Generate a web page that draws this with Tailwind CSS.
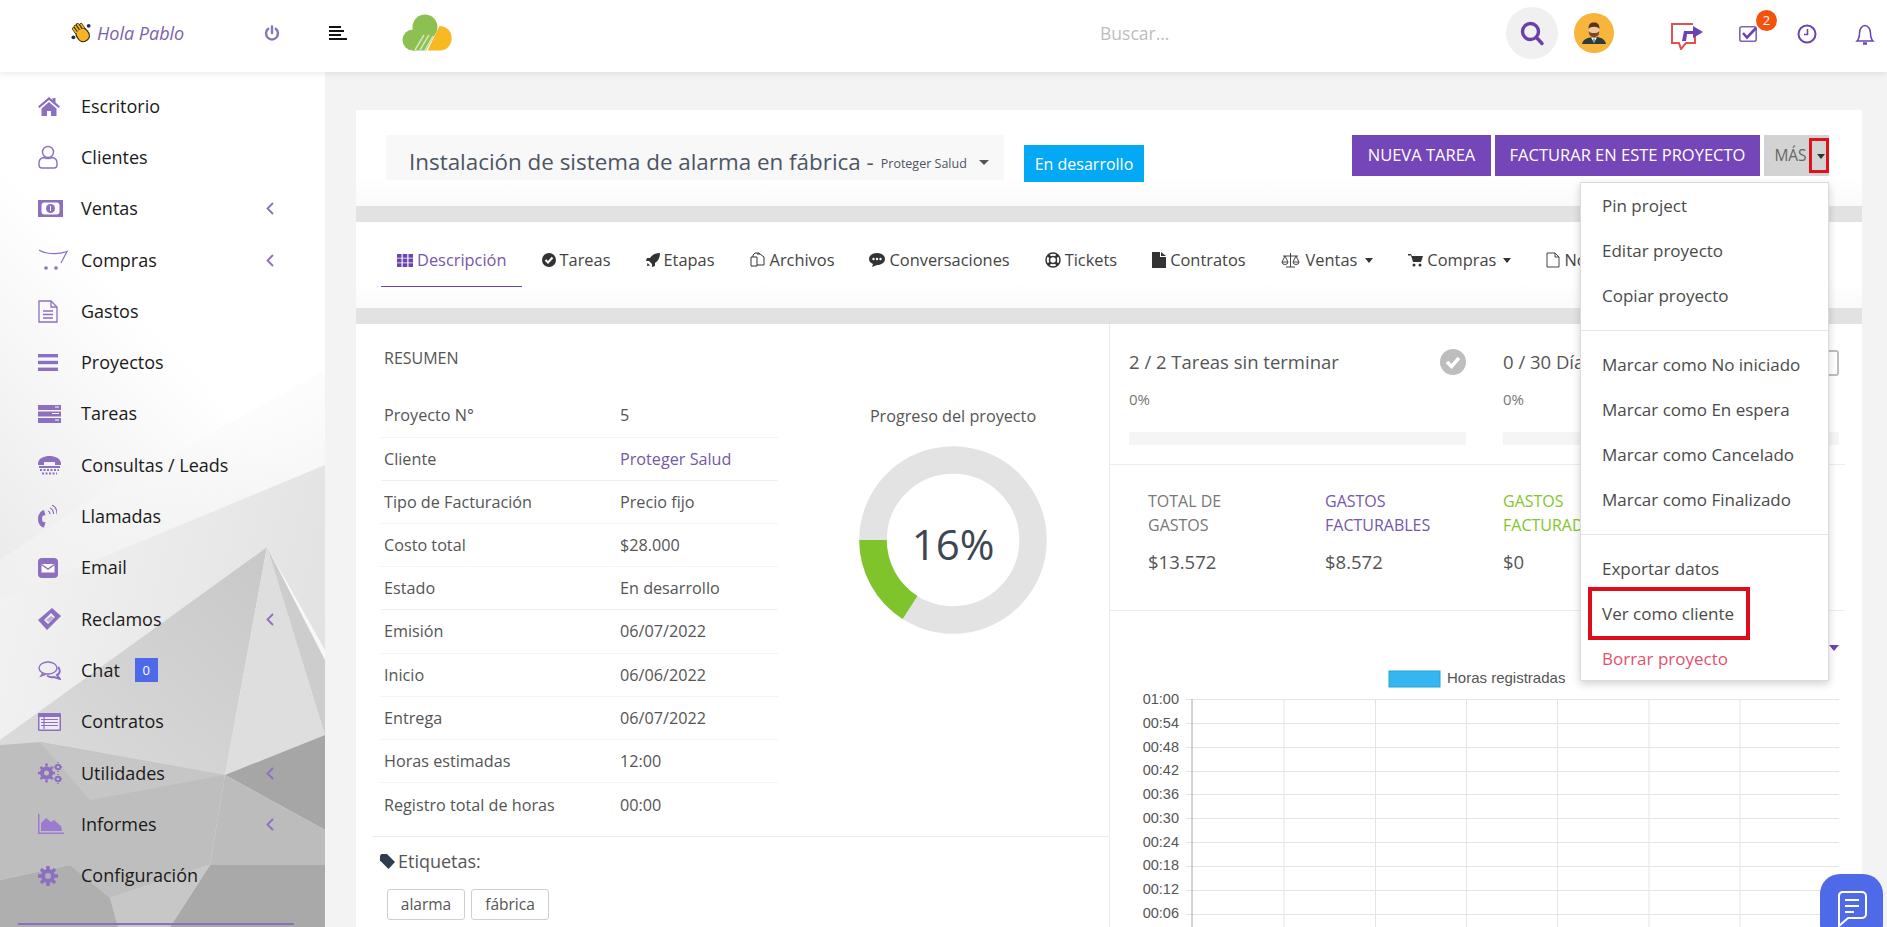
<!DOCTYPE html>
<html lang="es">
<head>
<meta charset="UTF-8" />
<title>Instalación de sistema de alarma en fábrica</title>
<script src="https://cdn.jsdelivr.net/npm/@tailwindcss/browser@4"></script>
</head>
<body class="h-screen overflow-hidden flex flex-col font-['Open_Sans',sans-serif] text-[#4a4a4a] bg-white relative">

<!-- header -->
<header class="h-[72px] shrink-0 flex items-center pb-[6px] bg-white relative z-10 shadow-[0_2px_6px_rgba(0,0,0,0.08)]">
  <div class="w-[325px] shrink-0 flex items-center pl-[71px]">
    <svg class="w-[21px] h-[21px]" viewBox="0 0 22 22"><circle cx="2.500" cy="15" r="2" fill="#1f3350"/><circle cx="18.500" cy="3" r="2" fill="#1f3350"/><g transform="rotate(-35 11 11)"><path d="M7 7V2M10 6V1M13 6V1M16 7V3" stroke="#3a2a10" stroke-width="3.200" stroke-linecap="round"/><rect x="5" y="6" width="12.500" height="14" rx="5.500" fill="#f5b527" stroke="#3a2a10" stroke-width="1.200"/><path d="M7 7V2M10 6V1M13 6V1M16 7V3" stroke="#f5b527" stroke-width="1.800" stroke-linecap="round"/></g></svg>
    <span class="ml-[5px] text-[18px] italic text-[#7a5fb0]">Hola Pablo</span>
    <svg class="ml-[80px] w-[16px] h-[16px]" viewBox="0 0 16 16" fill="none" stroke="#8a74bb" stroke-width="2.400" stroke-linecap="round"><path d="M8 1.500V8"/><path d="M4.200 3.800a6 6 0 1 0 7.600 0"/></svg>
  </div>
  <svg class="w-[18px] h-[14px] ml-[4px]" viewBox="0 0 18 14" fill="#111"><rect width="12" height="2"/><rect y="4" width="15" height="2"/><rect y="8" width="12" height="2"/><rect y="12" width="18" height="2"/></svg>
  <svg class="w-[52px] h-[38px] ml-[55px]" viewBox="0 0 52 38"><circle cx="23" cy="13" r="12.500" fill="#8cc152"/><circle cx="11" cy="26" r="10.500" fill="#8cc152"/><path d="M11 36.500V20H33L24 36.500Z" fill="#8cc152"/><path d="M25.500 36.500 37.500 12A12.300 12.300 0 0 1 39 36.500Z" fill="#f9b924"/><path d="M13 36 22 21M18 36 27 21M23 36 31 22" stroke="#d4e6bd" stroke-width="1.500"/></svg>
  <span class="ml-[646px] text-[17.500px] text-[#bdbdbd]">Buscar...</span>
  <div class="ml-auto flex items-center">
    <div class="w-[52px] h-[52px] rounded-full bg-[#f1f0f1] flex items-center justify-center">
      <svg class="w-[26px] h-[26px]" viewBox="0 0 26 26" fill="none" stroke="#6b3fa8" stroke-width="3.400" stroke-linecap="round"><circle cx="11.500" cy="11.500" r="8"/><path d="M17.500 17.500 23 23.500"/></svg>
    </div>
    <svg class="ml-[16px] w-[40px] h-[40px]" viewBox="0 0 40 40"><circle cx="20" cy="20" r="20" fill="#f7b53b"/><path d="M8 31c1-5 6-6.500 12-7s11 2 12 7Z" fill="#2f3a3a"/><path d="M17 24.500l3 5 3-5Z" fill="#fff"/><path d="M19.300 25.500h1.400V30h-1.400Z" fill="#3f9a7a"/><ellipse cx="20" cy="17" rx="5.500" ry="6.500" fill="#f2c6a0"/><path d="M14.500 16c0-5 2-6.500 5.500-6.500s5.500 1.500 5.500 6.500c-2-3-9-3-11 0Z" fill="#5b3418"/><path d="M14.700 18c0 4.500 2.300 6 5.300 6s5.300-1.500 5.300-6c-1.500 2-3 2-5.300 2s-3.800 0-5.300-2Z" fill="#7a4a25"/></svg>
    <svg class="ml-[57px] mt-[6px] w-[32px] h-[27px]" viewBox="0 0 32 27" fill="none"><path d="M22 1H1v19h7l2 6 5-6h9v-8" stroke="#e0524d" stroke-width="2"/><path d="M11 18 13 8h9V3l10 6-10 6v-4h-6l-1 7Z" fill="#6a44b0"/></svg>
    <div class="relative ml-[36px] mt-[2px] w-[18px] h-[16px]">
      <svg class="block w-[18px] h-[16px] overflow-visible" viewBox="0 0 18 16" fill="none"><rect x="0.800" y="0.800" width="16.400" height="14.400" rx="2" stroke="#7d65b5" stroke-width="1.600"/><path d="M4 7 8 11.500 17 2" stroke="#6a44b0" stroke-width="2.600"/></svg>
      <span class="absolute left-[17px] top-[-16px] w-[21px] h-[21px] rounded-full bg-[#f4520d] text-white text-[13px] flex items-center justify-center">2</span>
    </div>
    <svg class="ml-[40px] mt-[2px] w-[20px] h-[20px]" viewBox="0 0 20 20" fill="none" stroke="#6a44b0" stroke-width="2"><circle cx="10" cy="10" r="8.500"/><path d="M10.500 5v5.500H7" stroke-width="1.600"/></svg>
    <svg class="ml-[38px] mr-[12px] mt-[2px] w-[20px] h-[23px]" viewBox="0 0 20 23" fill="none" stroke="#6a44b0" stroke-width="1.500"><path d="M2 18c2-2 2.500-4 2.500-8S7 2.500 10 2.500 15.500 6 15.500 10s.5 6 2.500 8Z"/><path d="M8 20.500h4" stroke-width="2.500"/></svg>
  </div>
</header>

<div class="flex-1 flex min-h-0">
  <!-- sidebar -->
  <aside class="w-[325px] shrink-0 relative overflow-hidden bg-white">
    <svg class="absolute inset-0 w-[325px] h-[855px]" viewBox="0 72 325 855">
      <defs>
        <linearGradient id="sb" x1="0.6" y1="0" x2="0.2" y2="1"><stop offset="0.3" stop-color="#ffffff"/><stop offset="1" stop-color="#dcdcdc"/></linearGradient>
        <linearGradient id="g1" x1="0.2" y1="0" x2="0.8" y2="1"><stop offset="0" stop-color="#ffffff" stop-opacity="0"/><stop offset="1" stop-color="#ececec"/></linearGradient>
        <linearGradient id="g2" x1="0" y1="0.4" x2="1" y2="0.6"><stop offset="0" stop-color="#f2f2f2"/><stop offset="1" stop-color="#e2e2e2"/></linearGradient>
        <linearGradient id="g3" x1="0" y1="1" x2="1" y2="0"><stop offset="0" stop-color="#dcdcdc"/><stop offset="1" stop-color="#c8c8c8"/></linearGradient>
      </defs>
      <rect x="0" y="72" width="325" height="855" fill="url(#sb)"/>
      <path d="M325 370 L325 470 L0 610 L0 560 L90 500Z" fill="url(#g1)"/>
      <path d="M325 465 L325 650 L267 547 L0 740 L0 600Z" fill="url(#g2)"/>
      <path d="M267 547 L225 775 L40 742 L0 745 L0 740Z" fill="url(#g3)"/>
      <path d="M267 547 L325 735 L225 775Z" fill="#dedede"/>
      <path d="M267 547 L325 660 L325 735Z" fill="#cdcdcd"/>
      <path d="M0 745 L40 742 L225 775 L210 865 L110 898 L70 865 L0 880Z" fill="#bebebe"/>
      <path d="M40 742 L225 775 L90 800Z" fill="#c6c6c6"/>
      <path d="M225 775 L325 735 L325 830Z" fill="#a6a6a6"/>
      <path d="M225 775 L325 830 L325 865 L210 865Z" fill="#bcbcbc"/>
      <path d="M210 865 L325 865 L325 927 L170 927Z" fill="#a9a9a9"/>
      <path d="M110 898 L210 865 L170 927 L118 927Z" fill="#c7c7c7"/>
      <path d="M0 880 L70 865 L110 898 L118 927 L0 927Z" fill="#afafaf"/>
    </svg>
    <nav class="relative pt-[8.500px] text-[18px] font-medium text-[#1a1a1a]">
      <a class="h-[51.300px] flex items-center pl-[38px]"><span class="w-[43px] shrink-0"><svg class="w-[22px] h-[20px]" viewBox="0 0 22 20" fill="#8d6fc0"><path d="M11 1 0 10.500l1.500 1.500L11 4l9.500 8 1.500-1.500L17.500 6.500V2h-3v2Z"/><path d="M3.500 12.500 11 6l7.500 6.500V20H13v-5H9v5H3.500Z"/></svg></span>Escritorio</a>
      <a class="h-[51.300px] flex items-center pl-[38px]"><span class="w-[43px] shrink-0"><svg class="w-[20px] h-[24px]" viewBox="0 0 20 24" fill="none" stroke="#8d6fc0" stroke-width="1.400"><circle cx="10" cy="7" r="5.500"/><path d="M6 12.500C3 13 1 15 1 18v2c0 2 1 3 3 3h12c2 0 3-1 3-3v-2c0-3-2-5-5-5.500-2 1.500-6 1.500-8 0Z"/></svg></span>Clientes</a>
      <a class="h-[51.300px] flex items-center pl-[38px]"><span class="w-[43px] shrink-0"><svg class="w-[25px] h-[17px]" viewBox="0 0 25 17"><rect width="25" height="17" fill="#8d6fc0"/><rect x="3.500" y="2.500" width="18" height="12" rx="3" fill="#fff"/><circle cx="12.500" cy="8.500" r="4.500" fill="#8d6fc0"/><path d="M12 6h1v5h-1Z" fill="#fff"/></svg></span>Ventas<svg class="absolute left-[266px] w-[8px] h-[13px]" viewBox="0 0 8 13" fill="none" stroke="#8d6fc0" stroke-width="1.800"><path d="M7 1 1.500 6.500 7 12"/></svg></a>
      <a class="h-[51.300px] flex items-center pl-[38px]"><span class="w-[43px] shrink-0"><svg class="w-[30px] h-[22px]" viewBox="0 0 30 22" fill="none" stroke="#8d6fc0" stroke-width="1.200"><path d="M1 1c3 2 5 2.500 8 3 6 1 13 1 20-1.500L23 14"/><circle cx="8" cy="19" r="1.800" fill="#8d6fc0" stroke="none"/><circle cx="18" cy="19" r="1.800" fill="#8d6fc0" stroke="none"/></svg></span>Compras<svg class="absolute left-[266px] w-[8px] h-[13px]" viewBox="0 0 8 13" fill="none" stroke="#8d6fc0" stroke-width="1.800"><path d="M7 1 1.500 6.500 7 12"/></svg></a>
      <a class="h-[51.300px] flex items-center pl-[38px]"><span class="w-[43px] shrink-0"><svg class="w-[20px] h-[23px]" viewBox="0 0 20 23" fill="none" stroke="#8d6fc0" stroke-width="1.300"><path d="M1 1h12l6 6v15H1Z"/><path d="M13 1v6h6M5 11h10M5 14.500h10M5 18h10"/></svg></span>Gastos</a>
      <a class="h-[51.300px] flex items-center pl-[38px]"><span class="w-[43px] shrink-0"><svg class="w-[20px] h-[17px]" viewBox="0 0 20 17" fill="#8d6fc0"><rect width="20" height="3.400"/><rect y="6.800" width="20" height="3.400"/><rect y="13.600" width="20" height="3.400"/></svg></span>Proyectos</a>
      <a class="h-[51.300px] flex items-center pl-[38px]"><span class="w-[43px] shrink-0"><svg class="w-[23px] h-[18px]" viewBox="0 0 23 18"><rect width="23" height="5" fill="#8d6fc0"/><rect y="6.500" width="23" height="5" fill="#8d6fc0"/><rect y="13" width="23" height="5" fill="#8d6fc0"/><path d="M17 2h4M14 8.500h7M17 15h4" stroke="#fff" stroke-width="1"/></svg></span>Tareas</a>
      <a class="h-[51.300px] flex items-center pl-[38px]"><span class="w-[43px] shrink-0"><svg class="w-[23px] h-[19px]" viewBox="0 0 23 19" fill="#8d6fc0"><path d="M0 7C1 2 6 0 11.500 0S22 2 23 7v2h-6V6H6v3H0Z"/><rect x="1" y="10" width="21" height="2"/><path d="M2 14h19M4 17.500h15" stroke="#8d6fc0" stroke-width="2" stroke-dasharray="2 1.500"/></svg></span>Consultas / Leads</a>
      <a class="h-[51.300px] flex items-center pl-[38px]"><span class="w-[43px] shrink-0"><svg class="w-[19px] h-[23px]" viewBox="0 0 19 23" fill="none"><path d="M6 5C2 6 0 10 0 14s2 8 6 8.500l1.500-5-3-1c-.5-2-.5-4 0-5.500l3-1L6 5Z" fill="#8d6fc0"/><path d="M10 6c1.500.5 2 2 2 3M12 3c2.500 1 3.500 3.500 3.500 6M14 0c3.500 1.500 5 5 5 9" stroke="#8d6fc0" stroke-width="1.200"/></svg></span>Llamadas</a>
      <a class="h-[51.300px] flex items-center pl-[38px]"><span class="w-[43px] shrink-0"><svg class="w-[20px] h-[20px]" viewBox="0 0 20 20"><rect width="20" height="20" rx="4" fill="#8d6fc0"/><path d="M3.500 6h13v8.500h-13Z" fill="#fff"/><path d="M3.500 6.500 10 11l6.500-4.500" fill="none" stroke="#8d6fc0" stroke-width="1.500"/></svg></span>Email</a>
      <a class="h-[51.300px] flex items-center pl-[38px]"><span class="w-[43px] shrink-0"><svg class="w-[23px] h-[22px]" viewBox="0 0 23 22" fill="#8d6fc0"><path d="M0 12 14 0l9 8-14 14ZM6 12l4 4 7-7-4-4Z" fill-rule="evenodd"/><path d="M8 12l5-4 3 2-5 4Z" opacity="0.500"/></svg></span>Reclamos<svg class="absolute left-[266px] w-[8px] h-[13px]" viewBox="0 0 8 13" fill="none" stroke="#8d6fc0" stroke-width="1.800"><path d="M7 1 1.500 6.500 7 12"/></svg></a>
      <a class="h-[51.300px] flex items-center pl-[38px]"><span class="w-[43px] shrink-0"><svg class="w-[23px] h-[19px]" viewBox="0 0 23 19" fill="none" stroke="#8d6fc0" stroke-width="1.400"><ellipse cx="10" cy="7" rx="9" ry="6"/><path d="M5 12 3 15l5-2"/><path d="M20 6c2 2 3 6-1 8l3 4-6-2c-2 .5-5 0-7-1.500" stroke-width="2"/></svg></span>Chat<span class="ml-[15px] w-[23px] h-[24px] bg-[#4f6ae8] text-white text-[13px] font-normal flex items-center justify-center">0</span></a>
      <a class="h-[51.300px] flex items-center pl-[38px]"><span class="w-[43px] shrink-0"><svg class="w-[23px] h-[18px]" viewBox="0 0 23 18"><rect width="23" height="18" rx="1" fill="#8d6fc0"/><rect x="1.500" y="4" width="20" height="12.500" fill="#efeaf6"/><path d="M3 6.500h17M3 9.500h17M3 12.500h17M6 4v12" stroke="#8d6fc0" stroke-width="1.200"/></svg></span>Contratos</a>
      <a class="h-[51.300px] flex items-center pl-[38px]"><span class="w-[43px] shrink-0"><svg class="w-[24px] h-[23px]" viewBox="0 0 24 23" fill="none" stroke="#8d6fc0"><circle cx="8.500" cy="11" r="4.500" stroke-width="4"/><path d="M8.500 1.500v3M8.500 17.500v3M0 11h3M14 11h3M2.500 5l2 2M12.500 15l2 2M2.500 17l2-2M12.500 7l2-2" stroke-width="2.500"/><circle cx="20" cy="5" r="2.300" stroke-width="2"/><circle cx="20" cy="17" r="2.300" stroke-width="2"/><path d="M20 0v1M20 9v1M15.500 5h1M23 5h1M20 12v1M20 21v1M15.500 17h1M23 17h1" stroke-width="1.500"/></svg></span>Utilidades<svg class="absolute left-[266px] w-[8px] h-[13px]" viewBox="0 0 8 13" fill="none" stroke="#8d6fc0" stroke-width="1.800"><path d="M7 1 1.500 6.500 7 12"/></svg></a>
      <a class="h-[51.300px] flex items-center pl-[38px]"><span class="w-[43px] shrink-0"><svg class="w-[26px] h-[20px]" viewBox="0 0 26 20" fill="#9b7bd0"><path d="M0 0h1.500v18.500H26V20H0Z"/><path d="M3 17V9l5-5 5 4 3-2 7 6 1 5Z"/></svg></span>Informes<svg class="absolute left-[266px] w-[8px] h-[13px]" viewBox="0 0 8 13" fill="none" stroke="#8d6fc0" stroke-width="1.800"><path d="M7 1 1.500 6.500 7 12"/></svg></a>
      <a class="h-[51.300px] flex items-center pl-[38px]"><span class="w-[43px] shrink-0"><svg class="w-[20px] h-[20px]" viewBox="0 0 20 20" fill="none" stroke="#8d6fc0"><circle cx="10" cy="10" r="5" stroke-width="4"/><path d="M10 0v4M10 16v4M0 10h4M16 10h4M3 3l2.500 2.500M14.500 14.500 17 17M3 17l2.500-2.500M14.500 5.500 17 3" stroke-width="3.600"/></svg></span>Configuración</a>
    </nav>
    <div class="absolute left-[18px] w-[276px] top-[851px] h-[2px] bg-[#8d6fc0]"></div>
  </aside>

  <!-- main -->
  <main class="flex-1 min-w-0 bg-[#f3f3f3] pl-[31px] pr-[25px] pt-[38px] overflow-hidden">
    <div class="bg-[#e2e2e2] flex flex-col gap-[16px]">

      <section class="h-[96px] bg-linear-to-b from-white from-70% to-[#fafafa] flex items-start pl-[30px] pr-[33px] pt-[25px]">
        <div class="w-[618px] h-[45px] bg-[#f8f8f8] pl-[23px] pt-[8px] flex items-center text-[#4b5563]">
          <span class="text-[22.400px]">Instalación de sistema de alarma en fábrica -</span>
          <span class="ml-[7px] text-[12.500px] mt-[5px]">Proteger Salud</span>
          <span class="ml-[12px] mt-[2px] w-0 h-0 border-x-[5px] border-x-transparent border-t-[5px] border-t-[#555]"></span>
        </div>
        <span class="ml-[20px] mt-[10px] w-[120px] h-[37px] bg-[#03a9f4] text-white text-[16px] flex items-center justify-center">En desarrollo</span>
        <div class="ml-auto flex gap-[4px] text-[16.500px] font-medium text-white">
          <button class="w-[139px] h-[41px] bg-[#7546b8]">NUEVA TAREA</button>
          <button class="w-[265px] h-[41px] bg-[#7546b8]">FACTURAR EN ESTE PROYECTO</button>
          <button class="relative w-[65px] h-[41px] bg-[#d3d3d3] text-[#666] font-normal text-[15.500px] pr-[12px]">MÁS
            <span class="absolute right-[4px] top-[19px] w-0 h-0 border-x-[4px] border-x-transparent border-t-[5px] border-t-[#333]"></span>
            <span class="absolute right-0 top-[3px] w-[20px] h-[35px] border-[3px] border-[#e0101c]"></span>
          </button>
        </div>
      </section>

      <section class="h-[86px] bg-linear-to-b from-white from-70% to-[#fafafa] relative overflow-hidden">
        <div class="flex items-center gap-[35px] pl-[41px] pt-[26px] text-[16.400px] text-[#444] whitespace-nowrap">
          <a class="flex items-center gap-[4px] text-[#7557a8]"><svg class="w-[16px] h-[13px]" viewBox="0 0 16 13" fill="#6a44b0"><path d="M0 0h4.500v3.800H0ZM5.700 0h4.600v3.800H5.700ZM11.500 0H16v3.800h-4.500ZM0 4.600h4.500v3.800H0ZM5.700 4.600h4.600v3.800H5.700ZM11.500 4.600H16v3.800h-4.500ZM0 9.200h4.500V13H0ZM5.700 9.200h4.600V13H5.700ZM11.500 9.200H16V13h-4.500Z"/></svg>Descripción</a>
          <a class="flex items-center gap-[4px]"><svg class="w-[14px] h-[14px]" viewBox="0 0 14 14"><circle cx="7" cy="7" r="7" fill="#333"/><path d="M3.500 7 6 9.500l4.500-5" fill="none" stroke="#fff" stroke-width="2"/></svg>Tareas</a>
          <a class="flex items-center gap-[4px]"><svg class="w-[14px] h-[14px]" viewBox="0 0 14 14" fill="#333"><path d="M14 0C9 0 6 2 4 5H1L0 8h3l3 3v3l3-1V10c3-2 5-5 5-10Z"/><path d="M1.500 10 4 12.500 1 13Z"/></svg>Etapas</a>
          <a class="flex items-center gap-[4px]"><svg class="w-[16px] h-[16px]" viewBox="0 0 16 16" fill="none" stroke="#333"><path d="M1 5h6v9H1ZM7 2h3l4 3v8H7"/><path d="M3 5V3l2-2h4l1 1"/></svg>Archivos</a>
          <a class="flex items-center gap-[4px]"><svg class="w-[16px] h-[14px]" viewBox="0 0 16 14"><path d="M8 0c4.500 0 8 2.500 8 6s-3.500 6-8 6l-5 2 1-3C1.500 10 0 8 0 6c0-3.500 3.500-6 8-6Z" fill="#333"/><circle cx="4.500" cy="6" r="1.200" fill="#fff"/><circle cx="8" cy="6" r="1.200" fill="#fff"/><circle cx="11.500" cy="6" r="1.200" fill="#fff"/></svg>Conversaciones</a>
          <a class="flex items-center gap-[4px]"><svg class="w-[16px] h-[16px]" viewBox="0 0 16 16" fill="none" stroke="#333"><circle cx="8" cy="8" r="7" stroke-width="1.500"/><circle cx="8" cy="8" r="3.500" stroke-width="1.500"/><path d="M3 3l2.500 2.500M13 3l-2.500 2.500M3 13l2.500-2.500M13 13l-2.500-2.500" stroke-width="2.500"/></svg>Tickets</a>
          <a class="flex items-center gap-[4px]"><svg class="w-[14px] h-[16px]" viewBox="0 0 14 16" fill="#333"><path d="M0 0h8v5h6v11H0Z"/><path d="M9 0l5 4H9Z"/></svg>Contratos</a>
          <a class="flex items-center gap-[6px]"><svg class="w-[19px] h-[15px]" viewBox="0 0 19 15" fill="none" stroke="#444"><path d="M9.500 0v14M5 14h9M2 3h15M4 3 1 9h6ZM15 3l-3 6h6Z"/><path d="M1 9a3 2.500 0 0 0 6 0M12 9a3 2.500 0 0 0 6 0"/></svg>Ventas<span class="ml-[2px] w-0 h-0 border-x-[4px] border-x-transparent border-t-[5px] border-t-[#333]"></span></a>
          <a class="flex items-center gap-[4px]"><svg class="w-[15px] h-[14px]" viewBox="0 0 15 14" fill="#333"><path d="M0 1h3l1 2h11l-2 6H5L3 2.500H0Z"/><circle cx="6" cy="12" r="1.500"/><circle cx="12" cy="12" r="1.500"/></svg>Compras<span class="ml-[3px] w-0 h-0 border-x-[4px] border-x-transparent border-t-[5px] border-t-[#333]"></span></a>
          <a class="flex items-center gap-[4px]"><svg class="w-[14px] h-[16px]" viewBox="0 0 14 16" fill="none" stroke="#444"><path d="M1 1h8l4 4v10H1ZM9 1v4h4"/></svg>Notas</a>
        </div>
        <div class="absolute left-[25px] top-[64px] w-[141px] h-[1px] bg-[#6a44b0]"></div>
      </section>

      <section class="h-[700px] bg-white flex">
        <div class="w-[753px] shrink-0">
          <div class="flex">
            <div class="w-[422px] shrink-0 pl-[25px]">
              <h4 class="pl-[3px] pt-[22px] h-[70.500px] text-[16px] uppercase text-[#555]">Resumen</h4>
              <div class="text-[16.200px] text-[#555]">
                <div class="h-[43.200px] flex items-center border-b border-[#f1f4f5] pl-[3px]"><span class="w-[236px]">Proyecto N°</span><span>5</span></div>
                <div class="h-[43.200px] flex items-center border-b border-[#e6f2f7] pl-[3px]"><span class="w-[236px]">Cliente</span><span class="text-[#7557a8]">Proteger Salud</span></div>
                <div class="h-[43.200px] flex items-center border-b border-[#f1f4f5] pl-[3px]"><span class="w-[236px]">Tipo de Facturación</span><span>Precio fijo</span></div>
                <div class="h-[43.200px] flex items-center border-b border-[#f1f4f5] pl-[3px]"><span class="w-[236px]">Costo total</span><span>$28.000</span></div>
                <div class="h-[43.200px] flex items-center border-b border-[#e6f2f7] pl-[3px]"><span class="w-[236px]">Estado</span><span>En desarrollo</span></div>
                <div class="h-[43.200px] flex items-center border-b border-[#f1f4f5] pl-[3px]"><span class="w-[236px]">Emisión</span><span>06/07/2022</span></div>
                <div class="h-[43.200px] flex items-center border-b border-[#f1f4f5] pl-[3px]"><span class="w-[236px]">Inicio</span><span>06/06/2022</span></div>
                <div class="h-[43.200px] flex items-center border-b border-[#f1f4f5] pl-[3px]"><span class="w-[236px]">Entrega</span><span>06/07/2022</span></div>
                <div class="h-[43.200px] flex items-center border-b border-[#f1f4f5] pl-[3px]"><span class="w-[236px]">Horas estimadas</span><span>12:00</span></div>
                <div class="h-[43.200px] flex items-center pl-[3px]"><span class="w-[236px]">Registro total de horas</span><span>00:00</span></div>
              </div>
            </div>
            <div class="flex-1 pl-[19px] pt-[80px] flex flex-col items-center text-[#555]">
              <span class="text-[16.200px]">Progreso del proyecto</span>
              <div class="relative mt-[18px] w-[188px] h-[188px]">
                <svg class="w-[188px] h-[188px]" viewBox="0 0 188 188" fill="none" stroke-width="27.500"><circle cx="94" cy="94" r="80" stroke="#e3e3e3"/><path d="M14 94A80 80 0 0 0 51 161.500" stroke="#7fc42b"/></svg>
                <span class="absolute inset-0 pt-[6px] flex items-center justify-center text-[42px] text-[#3d4653]">16%</span>
              </div>
            </div>
          </div>
          <div class="ml-[16px] mt-[10px] border-t border-[#ececec] pl-[8px] pt-[11px]">
            <div class="flex items-center gap-[3px] text-[18px] text-[#555]"><svg class="w-[15px] h-[15px]" viewBox="0 0 15 15" fill="#2f3e4e"><path d="M0 1.500 1.500 0H7l8 8-6.500 7L0 6.500Z"/></svg>Etiquetas:</div>
            <div class="flex gap-[6px] mt-[14px] ml-[7px] text-[15.500px] text-[#555]">
              <span class="w-[78px] h-[31px] border border-[#cfcfcf] rounded-[3px] flex items-center justify-center">alarma</span>
              <span class="w-[78px] h-[31px] border border-[#cfcfcf] rounded-[3px] flex items-center justify-center">fábrica</span>
            </div>
          </div>
        </div>

        <div class="flex-1 min-w-0 border-l border-[#ececec] relative">
          <div class="h-[141px] flex pl-[19px] border-b border-[#ececec] mr-[17px] overflow-hidden">
            <div class="w-[337px] shrink-0 pt-[26px]">
              <div class="flex items-center justify-between h-[24px] text-[18.500px] text-[#555]">2 / 2 Tareas sin terminar
                <svg class="w-[26px] h-[26px]" viewBox="0 0 26 26"><circle cx="13" cy="13" r="13" fill="#bdbdbd"/><path d="M7 13l4.500 4.500L19 9" fill="none" stroke="#fff" stroke-width="3.500"/></svg>
              </div>
              <div class="mt-[14px] text-[15px] text-[#777]">0%</div>
              <div class="mt-[21px] h-[13px] bg-[#f5f5f5]"></div>
            </div>
            <div class="ml-[37px] w-[336px] shrink-0 pt-[26px]">
              <div class="flex items-center justify-between h-[24px] text-[18.500px] text-[#555]">0 / 30 Días para el final
                <svg class="w-[16px] h-[28px]" viewBox="0 0 16 28" fill="none" stroke="#bdbdbd" stroke-width="2"><rect x="1" y="3" width="14" height="24" rx="2"/></svg>
              </div>
              <div class="mt-[14px] text-[15px] text-[#777]">0%</div>
              <div class="mt-[21px] h-[13px] bg-[#f5f5f5]"></div>
            </div>
          </div>
          <div class="h-[146px] flex pl-[38px] pt-[24px] border-b border-[#ececec] mr-[17px] text-[16px] leading-[24px] whitespace-nowrap overflow-hidden">
            <div class="w-[177px] shrink-0 text-[#777]"><div>TOTAL DE<br>GASTOS</div><div class="mt-[13px] text-[18.500px] text-[#555]">$13.572</div></div>
            <div class="w-[178px] shrink-0 text-[#7557a8]"><div>GASTOS<br>FACTURABLES</div><div class="mt-[13px] text-[18.500px] text-[#555]">$8.572</div></div>
            <div class="text-[#84c529]"><div>GASTOS<br>FACTURADOS</div><div class="mt-[13px] text-[18.500px] text-[#555]">$0</div></div>
          </div>
          <svg class="block w-[752px] h-[330px]" viewBox="1110 611 752 330" font-family="Liberation Sans, sans-serif" font-size="14.500" fill="#555">
            <path d="M1829 645h10l-5 6Z" fill="#6a44b0"/>
            <rect x="1389" y="671" width="51" height="16" fill="#36b6f0" stroke="#25a0d8"/>
            <text x="1447" y="683" font-size="15">Horas registradas</text>
            <g stroke="#e4e4e4" stroke-width="1">
              <path d="M1186 699.500H1839M1186 723.500H1839M1186 747.500H1839M1186 771.500H1839M1186 794.500H1839M1186 818.500H1839M1186 842.500H1839M1186 866.500H1839M1186 890.500H1839M1186 914.500H1839"/>
              <path d="M1284 699V940M1375.500 699V940M1466.500 699V940M1557.500 699V940M1649 699V940M1740 699V940"/>
            </g>
            <path d="M1192 699V940" stroke="#a8a8a8"/>
            <g text-anchor="end">
              <text x="1179" y="704">01:00</text>
              <text x="1179" y="728">00:54</text>
              <text x="1179" y="752">00:48</text>
              <text x="1179" y="775">00:42</text>
              <text x="1179" y="799">00:36</text>
              <text x="1179" y="823">00:30</text>
              <text x="1179" y="847">00:24</text>
              <text x="1179" y="870">00:18</text>
              <text x="1179" y="894">00:12</text>
              <text x="1179" y="918">00:06</text>
            </g>
          </svg>
        </div>
      </section>
    </div>
  </main>
</div>

<!-- dropdown -->
<div class="absolute left-[1580px] top-[182px] w-[249px] h-[499px] bg-white border border-[#dcdcdc] shadow-[0_3px_8px_rgba(0,0,0,0.18)] z-20 text-[17px] text-[#4a4a4a] pl-[21px]">
  <div class="h-[45px] flex items-center">Pin project</div>
  <div class="h-[45px] flex items-center">Editar proyecto</div>
  <div class="h-[45px] flex items-center">Copiar proyecto</div>
  <div class="h-[1px] -ml-[21px] my-[11.500px] bg-[#e5e5e5]"></div>
  <div class="h-[45px] flex items-center">Marcar como No iniciado</div>
  <div class="h-[45px] flex items-center">Marcar como En espera</div>
  <div class="h-[45px] flex items-center">Marcar como Cancelado</div>
  <div class="h-[45px] flex items-center">Marcar como Finalizado</div>
  <div class="h-[1px] -ml-[21px] my-[11.500px] bg-[#e5e5e5]"></div>
  <div class="h-[45px] flex items-center">Exportar datos</div>
  <div class="h-[45px] flex items-center relative">Ver como cliente<span class="absolute -left-[14px] top-[-4px] w-[162px] h-[53px] border-[4px] border-[#e00c1a]"></span></div>
  <div class="h-[45px] flex items-center text-[#e0526f]">Borrar proyecto</div>
</div>

<!-- chat button -->
<div class="absolute left-[1820px] top-[874px] w-[63px] h-[70px] rounded-[20px] bg-[#4f6ae8] flex items-start justify-center pt-[17px] z-20">
  <svg class="w-[30px] h-[36px]" viewBox="0 0 30 36" fill="none" stroke="#fff" stroke-width="2"><path d="M5 1h20a4 4 0 0 1 4 4v18a4 4 0 0 1-4 4H11l-9 8V5a4 4 0 0 1 3-4Z"/><path d="M8 9h14M8 15h14M8 21h9"/></svg>
</div>
</body>
</html>
